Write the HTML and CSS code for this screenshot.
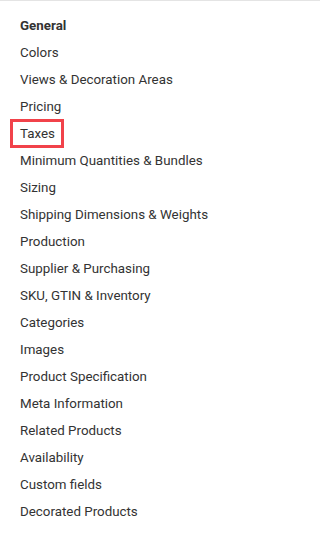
FILE: index.html
```html
<!DOCTYPE html>
<html lang="en">
<head>
<meta charset="utf-8">
<title>Product sections</title>
<link rel="stylesheet" href="styles.css">
</head>
<body>
<nav class="sidenav">
  <ul class="menu">
    <li class="item heading">General</li>
    <li class="item">Colors</li>
    <li class="item">Views &amp; Decoration Areas</li>
    <li class="item">Pricing</li>
    <li class="item"><span class="marked">Taxes</span></li>
    <li class="item">Minimum Quantities &amp; Bundles</li>
    <li class="item">Sizing</li>
    <li class="item">Shipping Dimensions &amp; Weights</li>
    <li class="item">Production</li>
    <li class="item">Supplier &amp; Purchasing</li>
    <li class="item">SKU, GTIN &amp; Inventory</li>
    <li class="item">Categories</li>
    <li class="item">Images</li>
    <li class="item">Product Specification</li>
    <li class="item">Meta Information</li>
    <li class="item">Related Products</li>
    <li class="item">Availability</li>
    <li class="item">Custom fields</li>
    <li class="item">Decorated Products</li>
  </ul>
</nav>
</body>
</html>
```
FILE: styles.css
```css
html, body {
  margin: 0;
  padding: 0;
  background: #ffffff;
}
body {
  font-family: Roboto, "Liberation Sans", Arial, sans-serif;
  font-size: 13.35px;
  color: #333333;
}
.sidenav {
  border-top: 1px solid #e4e4e4;
  padding: 11px 0 0 20px;
}
.menu {
  list-style: none;
  margin: 0;
  padding: 0;
}
.item {
  line-height: 27px;
  white-space: nowrap;
}
.heading {
  font-weight: 700;
}
.marked {
  position: relative;
}
.marked::after {
  content: "";
  position: absolute;
  left: -10px;
  right: -9px;
  top: -7px;
  bottom: -7px;
  border: 3px solid #f1424a;
}
```
